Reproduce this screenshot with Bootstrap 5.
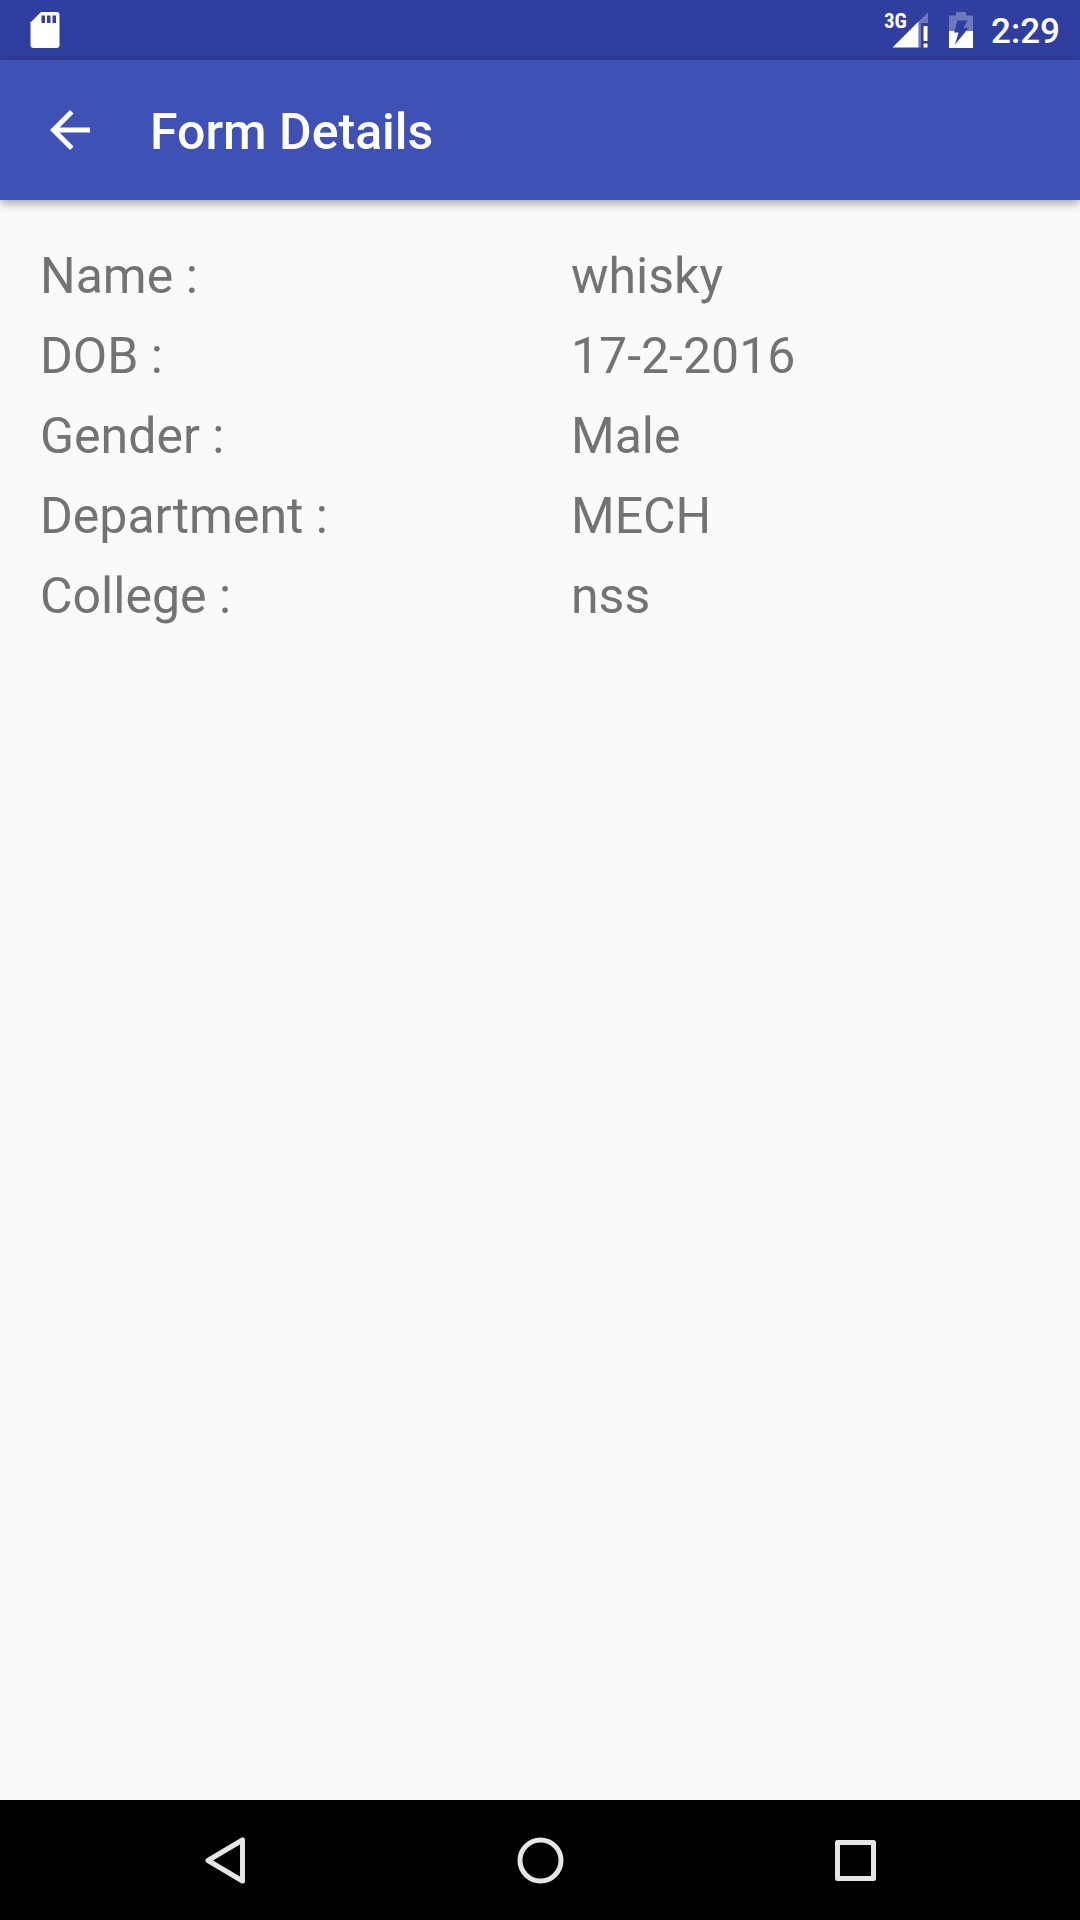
<!DOCTYPE html>
<html lang="en">
<head>
<meta charset="utf-8">
<meta name="viewport" content="width=device-width, initial-scale=1">
<title>Form Details</title>
<link href="https://cdn.jsdelivr.net/npm/bootstrap@5.3.0/dist/css/bootstrap.min.css" rel="stylesheet">
<style>
  body { font-family: Roboto, "Noto Sans", sans-serif; background: #fafafa; color: #737373; }
  svg { display: block; }
  .status-bar { height: 60px; padding: 0 20px 0 30px; background: #303f9f; color: #fff; }
  .status-icons { gap: 18px; }
  .clock { font-size: 35px; line-height: 56px; font-weight: 500; padding-top: 4px; }
  .net-type { font-family: "Roboto Condensed", Roboto, sans-serif; font-size: 21px; font-weight: 700; fill: #fff; }
  .app-bar { position: relative; height: 140px; padding: 0 40px; gap: 50px; background: #3f51b5; color: #fff;
             box-shadow: 0 3px 10px rgba(0, 0, 0, .38); }
  .app-title { font-size: 50px; line-height: 60px; font-weight: 500; padding-top: 4px; }
  .details { padding: 36px 40px; font-size: 50px; line-height: 80px; }
  .detail-row { display: grid; grid-template-columns: 531fr 469fr; }
  .detail-row dt { font-weight: 400; }
  .nav-keys { height: 120px; padding: 0 68px; background: #000; }
</style>
</head>
<body>
<div class="min-vh-100 d-flex flex-column">
  <div class="status-bar d-flex align-items-center justify-content-between">
    <svg width="30" height="60" viewBox="0 0 30 60" role="img" aria-label="SD card">
      <path fill="#fff" d="M11 12H26.500Q29.500 12 29.500 15V45Q29.500 48 26.500 48H3.500Q.5 48 .5 45V22.500Z"/>
      <path fill="#303f9f" d="M11.500 15.500h3.500v7.500h-3.500zM17 15.500h3.500v7.500H17zM22.500 15.500H26v7.500h-3.500z"/>
    </svg>
    <div class="status-icons d-flex align-items-center">
      <svg width="47" height="60" viewBox="884 0 47 60" role="img" aria-label="3G signal, no internet">
        <path fill="#fff" d="M892.500 47.500L918.500 21.500V47.500Z"/>
        <path fill="#fff" fill-opacity=".3" d="M918.500 21.500L928 12.500V23H921V47.500H918.500Z"/>
        <path fill="#fff" d="M923.500 26h4v15h-4zM923.500 43.500h4v4h-4z"/>
        <text class="net-type" x="884" y="28">3G</text>
      </svg>
      <svg width="24" height="60" viewBox="949 0 24 60" role="img" aria-label="Battery charging">
        <path fill="#fff" fill-opacity=".3" d="M956 12h10v3.500h7V31h-24V15.500h7z"/>
        <path fill="#fff" d="M949 31h24v17h-24z"/>
        <path fill="#303f9f" d="M957.500 20.500H967.500L963.500 28H968.500L955 44.500L958.500 32.500H954Z"/>
      </svg>
      <span class="clock">2:29</span>
    </div>
  </div>
  <header class="app-bar d-flex align-items-center">
    <a href="#" class="text-white" aria-label="Back">
      <svg width="60" height="60" viewBox="0 0 24 24" fill="currentColor"><path d="M20 11H7.830l5.590-5.590L12 4l-8 8 8 8 1.410-1.410L7.830 13H20v-2z"/></svg>
    </a>
    <h1 class="app-title mb-0">Form Details</h1>
  </header>
  <main class="flex-grow-1">
    <dl class="details mb-0">
      <div class="detail-row"><dt>Name :</dt><dd class="mb-0">whisky</dd></div>
      <div class="detail-row"><dt>DOB :</dt><dd class="mb-0">17-2-2016</dd></div>
      <div class="detail-row"><dt>Gender :</dt><dd class="mb-0">Male</dd></div>
      <div class="detail-row"><dt>Department :</dt><dd class="mb-0">MECH</dd></div>
      <div class="detail-row"><dt>College :</dt><dd class="mb-0">nss</dd></div>
    </dl>
  </main>
  <nav class="nav-keys d-flex align-items-stretch" aria-label="System">
    <button type="button" class="btn p-0 border-0 rounded-0 w-100 d-flex align-items-center justify-content-center" aria-label="Back">
      <svg width="60" height="60" viewBox="0 0 60 60" fill="none" stroke="#e6e6e6" stroke-width="5" stroke-linejoin="round"><path d="M13 30.500L47.500 10V51Z"/></svg>
    </button>
    <button type="button" class="btn p-0 border-0 rounded-0 w-100 d-flex align-items-center justify-content-center" aria-label="Home">
      <svg width="60" height="60" viewBox="0 0 60 60" fill="none" stroke="#e6e6e6" stroke-width="5"><circle cx="30.500" cy="30.500" r="20.500"/></svg>
    </button>
    <button type="button" class="btn p-0 border-0 rounded-0 w-100 d-flex align-items-center justify-content-center" aria-label="Recent apps">
      <svg width="60" height="60" viewBox="0 0 60 60" fill="none" stroke="#e6e6e6" stroke-width="5" stroke-linejoin="round"><path d="M12.500 12.500H48.500V48.500H12.500Z"/></svg>
    </button>
  </nav>
</div>
<script src="https://cdn.jsdelivr.net/npm/bootstrap@5.3.0/dist/js/bootstrap.bundle.min.js"></script>
</body>
</html>
